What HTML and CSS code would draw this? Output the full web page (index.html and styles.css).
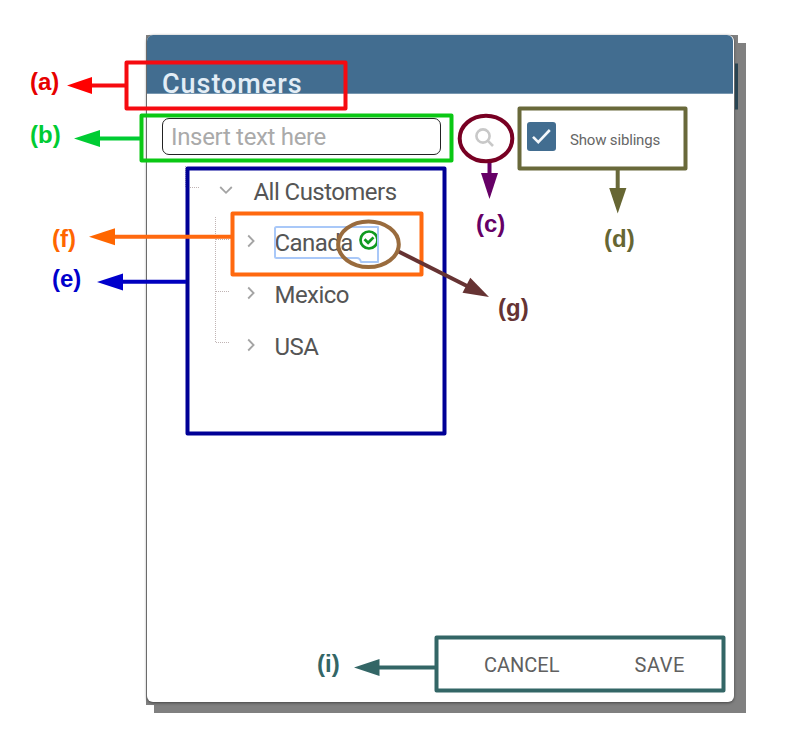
FILE: index.html
```html
<!DOCTYPE html>
<html lang="en">
<head>
<meta charset="utf-8">
<title>Customers</title>
<link rel="stylesheet" href="styles.css">
</head>
<body>
<main class="stage">
  <div class="frame">
    <section class="dialog">
      <header class="head"><h1 class="title">Customers</h1></header>
      <div class="tools">
        <div class="search">Insert text here</div>
        <svg class="lens" width="20" height="20" viewBox="0 0 20 20"><circle cx="8" cy="8" r="6.6"/><path d="M12.700 12.700L18 18"/></svg>
        <span class="check"><svg width="29" height="29" viewBox="0 0 29 29"><path d="M6 14.800l5.300 5.400L22.800 8"/></svg></span>
        <span class="siblings">Show siblings</span>
      </div>
      <div class="tree">
        <div class="row root">
          <svg class="chev" width="14" height="14" viewBox="0 0 14 14"><path d="M1.200 4L7 9.800 12.800 4"/></svg>
          <span class="name">All Customers</span>
        </div>
        <div class="row">
          <svg class="chev" width="14" height="14" viewBox="0 0 14 14"><path d="M4.200 1.500L9.600 7l-5.400 5.500"/></svg>
          <span class="name">Canada
            <svg class="ok" width="20" height="20" viewBox="0 0 20 20"><circle cx="10" cy="10" r="8.500"/><path d="M5.500 9.300l3.600 3.500 5.400-5.400"/></svg>
          </span>
        </div>
        <div class="row">
          <svg class="chev" width="14" height="14" viewBox="0 0 14 14"><path d="M4.200 1.500L9.600 7l-5.400 5.500"/></svg>
          <span class="name">Mexico</span>
        </div>
        <div class="row">
          <svg class="chev" width="14" height="14" viewBox="0 0 14 14"><path d="M4.200 1.500L9.600 7l-5.400 5.500"/></svg>
          <span class="name">USA</span>
        </div>
      </div>
      <footer class="actions"><span>CANCEL</span><span class="save">SAVE</span></footer>
    </section>
  </div>
  <svg class="notes" width="799" height="743" viewBox="0 0 799 743">
    <path class="edge" d="M736.500 63.500v46"/>
    <g class="guides">
      <path d="M185.500 166v21M186 187.500h13M215.500 217v126M216 239.500h14M216 291.500h14M216 342.500h14"/>
    </g>
    <path class="focus" d="M276.500 227h101.500v35h-17q-1-4-4-4h-80.500q-1.500 0-1.500-1.500v-28q0-1.500 1.500-1.500z"/>
    <g class="red"><rect x="126.500" y="62.500" width="219" height="46"/><path d="M126 85.500H90"/><path class="tip" d="M67 85.500l25-8.500v17z"/></g>
    <g class="green"><rect x="141.500" y="115.500" width="310" height="45"/><g class="mint"><path d="M140 138.500H98"/><path class="tip" d="M74 138.500l26-8.500v17z"/></g></g>
    <g class="blue"><rect x="187.500" y="168.500" width="257" height="265"/><g class="bright"><path d="M186 281.800H120"/><path class="tip" d="M97 282l26-8.500v17z"/></g></g>
    <g class="orange"><rect x="232.500" y="213.500" width="189" height="61"/><path d="M232 236.700H113"/><path class="tip" d="M89 236.700l26-8.500v17z"/></g>
    <g class="plum"><path d="M489.500 162v14"/><path class="tip" d="M489.500 199l-8.500-26h17z"/></g>
    <ellipse class="wine" cx="486" cy="138.500" rx="26.300" ry="22.800"/>
    <g class="olive"><rect x="519.500" y="108.500" width="166" height="60"/><path d="M617.700 169v20"/><path class="tip" d="M617.700 213.500l-8.500-25.500h17.200z"/></g>
    <g class="maroon"><path d="M398.500 251.500L468 286.500"/><path class="tip" d="M489 297l-26.500-4.200 7.800-15z"/></g>
    <ellipse class="tan" cx="368.500" cy="244.300" rx="30.300" ry="22.800"/>
    <g class="teal"><rect x="436.500" y="637.500" width="287" height="53"/><path d="M436 667.500H378"/><path class="tip" d="M354 667.500l25.500-8.500v17z"/></g>
    <g class="labels">
      <text x="30" y="90" fill="#e60000">(a)</text>
      <text x="30" y="143" fill="#0c3">(b)</text>
      <text x="476" y="232" fill="#606">(c)</text>
      <text x="604" y="247" fill="#663">(d)</text>
      <text x="52" y="287" fill="#00c">(e)</text>
      <text x="52" y="247" fill="#f60">(f)</text>
      <text x="498" y="316" fill="#633">(g)</text>
      <text x="317" y="672" fill="#366">(i)</text>
    </g>
  </svg>
</main>
</body>
</html>
```

FILE: styles.css
```css
* { box-sizing: border-box; }
body { margin: 0; background: #fff; font-family: Roboto, sans-serif; }
.stage { position: relative; width: 799px; height: 743px; padding: 35px 0 0 146px; overflow: hidden; }
.frame { width: 592px; height: 670px; padding: 0 4px 3px 1px; background: #808080; box-shadow: 8px 8px 0 #808080; }
.dialog { display: flex; flex-direction: column; height: 667px; border-radius: 6px; background: #fff; box-shadow: 0 1px 3px #444; }
.head { height: 59px; margin-right: 1px; padding: 34px 0 0 15px; border-radius: 6px 6px 0 0; background: #426d90; border-bottom: 1px solid #7897b0; }
.title { margin: 0; color: #e3edf6; font-size: 27px; font-weight: 500; line-height: 30px; letter-spacing: 0.95px; white-space: nowrap; }
.tools { display: flex; height: 62px; padding: 24px 0 0 15px; }
.search { width: 279px; height: 37px; padding-left: 8px; border: 1.5px solid #222; border-radius: 7px; color: #aaa; font-size: 24px; line-height: 37px; letter-spacing: -0.33px; white-space: nowrap; }
svg { flex: none; fill: none; }
.lens { margin: 10px 0 0 34px; stroke: #c8c8c8; stroke-width: 2.600; }
.check { width: 29px; height: 29px; margin: 4px 0 0 32px; border-radius: 3px; background: #426d90; }
.check svg { display: block; stroke: #f4f7fa; stroke-width: 2.600; }
.siblings { margin: 12px 0 0 14px; font-size: 15px; line-height: 20px; letter-spacing: -0.17px; color: #666; white-space: nowrap; }
.tree { flex: 1; padding: 9px 0 0 97px; }
.row { display: flex; align-items: center; height: 52px; color: #555; font-size: 24px; letter-spacing: -0.55px; }
.root { margin-left: -25px; padding-top: 1px; }
.chev { margin-top: -4px; stroke: #a4a4a4; stroke-width: 1.800; }
.root .chev { margin-right: 4px; }
.name { display: flex; align-items: center; margin-left: 16.500px; white-space: nowrap; }
.ok { margin: -6px 0 0 6px; stroke: #109a20; stroke-width: 2.700; }
.actions { display: flex; height: 76px; padding: 27px 0 0 337px; gap: 75px; color: #606060; font-size: 20px; line-height: 24px; }
.save { letter-spacing: 0.6px; }
.notes { position: absolute; inset: 0; }
.notes rect, .notes path, .notes ellipse { stroke-width: 4; stroke-linejoin: round; }
.notes .tip { stroke: none; }
.notes .edge { stroke: #294452; stroke-width: 3; }
.notes .guides path { stroke: #c0b4b4; stroke-width: 1; stroke-dasharray: 1 1; }
.notes .focus { stroke: #a9c8f8; stroke-width: 2; }
.red { stroke: #f60a10; } .red .tip { fill: #f00; }
.green { stroke: #0ac814; } .mint { stroke: #0c3; } .mint .tip { fill: #0c3; }
.blue { stroke: #000096; } .bright { stroke: #0000be; } .bright .tip { fill: #00c; }
.orange { stroke: #ff690f; } .orange .tip { fill: #f60; }
.plum { stroke: #606; } .plum .tip { fill: #606; }
.wine { stroke: #780023; }
.olive { stroke: #69693a; } .olive .tip { fill: #663; }
.maroon { stroke: #633; } .maroon .tip { fill: #633; }
.tan { stroke: #996b3d; }
.teal { stroke: #366; } .teal .tip { fill: #366; }
.labels text { font: bold 24px "Liberation Sans", Arial, sans-serif; }
```
